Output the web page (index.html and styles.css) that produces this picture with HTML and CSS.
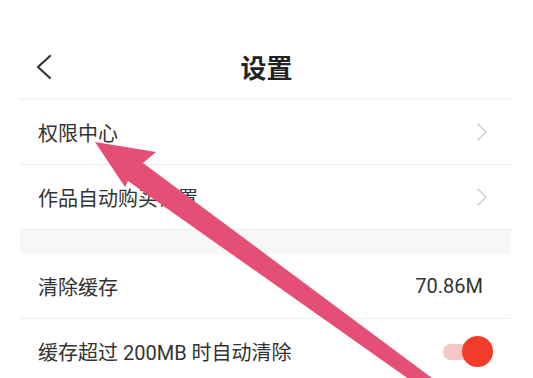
FILE: index.html
```html
<!DOCTYPE html>
<html lang="zh-CN">
<head>
<meta charset="utf-8">
<title>设置</title>
<link rel="stylesheet" href="styles.css">
</head>
<body>
<div class="page">
  <header class="header">
    <div class="back">
      <svg width="16" height="26" viewBox="0 0 16 26"><path d="M14 2 L2 13 L14 24" fill="none" stroke="#333" stroke-width="2.2" stroke-linecap="round" stroke-linejoin="round"/></svg>
    </div>
    <h1 class="title">设置</h1>
    <div></div>
  </header>
  <div class="list">
    <div class="row">
      <span class="label">权限中心</span>
      <svg class="chev" width="12" height="18" viewBox="0 0 12 18"><path d="M2 1 L10 9 L2 17" fill="none" stroke="#cfcfcf" stroke-width="1.5" stroke-linecap="round" stroke-linejoin="round"/></svg>
    </div>
    <div class="row">
      <span class="label">作品自动购买设置</span>
      <svg class="chev" width="12" height="18" viewBox="0 0 12 18"><path d="M2 1 L10 9 L2 17" fill="none" stroke="#cfcfcf" stroke-width="1.5" stroke-linecap="round" stroke-linejoin="round"/></svg>
    </div>
    <div class="band"></div>
    <div class="row">
      <span class="label">清除缓存</span>
      <span class="value">70.86M</span>
    </div>
    <div class="row last">
      <span class="label">缓存超过 200MB 时自动清除</span>
      <div class="toggle"><span class="track"></span><span class="knob"></span></div>
    </div>
  </div>
  <svg class="arrow" width="533" height="378" viewBox="0 0 533 378">
    <polygon points="95,142 156,152 143,163 436,381 430,394 128,181 125,187" fill="#e54e75"/>
  </svg>
</div>
</body>
</html>
```
FILE: styles.css
```css
* { box-sizing: border-box; }
html, body { margin: 0; padding: 0; background: #fff; }
body {
  font-family: Roboto, "Noto Sans CJK SC", sans-serif;
  color: #333;
  overflow: hidden;
}
.page {
  position: relative;
  width: 533px;
  height: 378px;
  overflow: hidden;
}
.header {
  height: 98px;
  padding-top: 36px;
  display: grid;
  grid-template-columns: 1fr auto 1fr;
  align-items: center;
}
.back {
  padding-left: 36px;
  display: flex;
  align-items: center;
}
.back svg { display: block; }
.title {
  margin: 0;
  font-family: "Noto Sans CJK SC", sans-serif;
  font-size: 26px;
  font-weight: 700;
  color: #222;
  line-height: 1;
}
.list {
  margin-left: 20px;
  width: 491px;
  border-top: 2px solid #f5f5f5;
}
.row {
  height: 65px;
  padding: 0 18px;
  display: flex;
  align-items: center;
  justify-content: space-between;
  border-bottom: 1px solid #eeeeee;
  font-size: 20px;
}
.row.last { border-bottom: none; }
.label { color: #333; }
.value { color: #333; margin-right: 10px; font-size: 20px; }
.chev { display: block; margin-right: 5px; }
.band {
  height: 24px;
  background: #f7f7f7;
}
.toggle {
  position: relative;
  width: 50px;
  height: 31px;
}
.track {
  position: absolute;
  left: 0;
  top: 8px;
  width: 34px;
  height: 16px;
  border-radius: 8px;
  background: #f8c6c6;
}
.knob {
  position: absolute;
  right: 0;
  top: 0;
  width: 31px;
  height: 31px;
  border-radius: 50%;
  background: #f23b2b;
}
.arrow {
  position: absolute;
  left: 0;
  top: 0;
  pointer-events: none;
}
```
